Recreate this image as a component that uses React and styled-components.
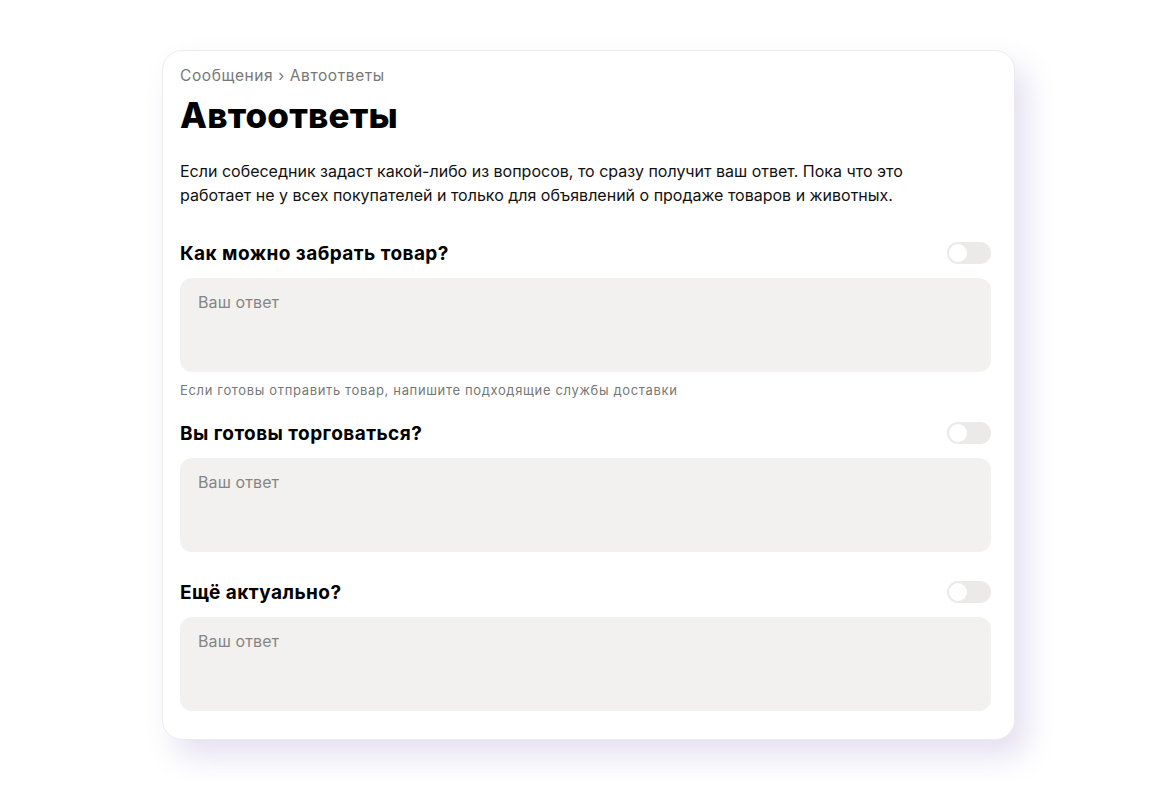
import styled, { createGlobalStyle } from 'styled-components';

const GlobalStyle = createGlobalStyle`
  body {
    margin: 0;
    background: #ffffff;
    font-family: Inter, "Noto Sans", sans-serif;
    color: #111;
  }
`

const Page = styled.div`
  padding: 50px 0 60px 162px;
`

const Card = styled.section`
  box-sizing: border-box;
  width: 853px;
  padding: 15px 23px 28px 17px;
  background: #fff;
  border: 1px solid #ececf0;
  border-radius: 20px;
  box-shadow: 12px 16px 30px rgba(105, 85, 170, 0.18);
`

const Crumbs = styled.div`
  font-size: 15.5px;
  line-height: 20px;
  letter-spacing: 0.6px;
  color: #777;
`

const Title = styled.h1`
  margin: 8px 0 0;
  font-size: 35px;
  line-height: 42px;
  font-weight: 800;
  letter-spacing: 0.2px;
  color: #000;
`

const Lead = styled.p`
  margin: 23px 0 0;
  font-size: 16px;
  line-height: 24px;
  color: #111;
`

const Question = styled.div`
  margin-top: ${p => (p.$first ? '34px' : p.$afterHint ? '24px' : '28px')};
`

const QHead = styled.div`
  display: flex;
  align-items: center;
  justify-content: space-between;
  height: 24px;
`

const QTitle = styled.h3`
  margin: 0;
  font-size: 19px;
  font-weight: 700;
  letter-spacing: 0.45px;
  color: #000;
`

const Toggle = styled.span`
  position: relative;
  width: 44px;
  height: 22px;
  border-radius: 11px;
  background: #ebeae8;

  &::after {
    content: '';
    position: absolute;
    top: 2px;
    left: 2px;
    width: 18px;
    height: 18px;
    border-radius: 50%;
    background: #fff;
  }
`

const Answer = styled.textarea`
  display: block;
  box-sizing: border-box;
  width: 100%;
  height: 94px;
  margin-top: 13px;
  padding: 14px 18px;
  border: none;
  border-radius: 12px;
  background: #f2f1f0;
  resize: none;
  font-family: inherit;
  font-size: 16px;
  line-height: 20px;
  letter-spacing: 0.1px;

  &::placeholder {
    color: #858585;
  }
`

const Hint = styled.div`
  margin-top: 11px;
  font-size: 13px;
  line-height: 14px;
  letter-spacing: 0.65px;
  color: #777;
`

const questions = [
  { title: 'Как можно забрать товар?', hint: 'Если готовы отправить товар, напишите подходящие службы доставки' },
  { title: 'Вы готовы торговаться?' },
  { title: 'Ещё актуально?' },
]

export default function App() {
  return (
    <Page>
      <GlobalStyle />
      <Card>
        <Crumbs>Сообщения › Автоответы</Crumbs>
        <Title>Автоответы</Title>
        <Lead>
          Если собеседник задаст какой-либо из вопросов, то сразу получит ваш ответ. Пока что это
          <br />
          работает не у всех покупателей и только для объявлений о продаже товаров и животных.
        </Lead>
        {questions.map((q, i) => (
          <Question key={q.title} $first={i === 0} $afterHint={i > 0 && !!questions[i - 1].hint}>
            <QHead>
              <QTitle>{q.title}</QTitle>
              <Toggle />
            </QHead>
            <Answer placeholder="Ваш ответ" />
            {q.hint && <Hint>{q.hint}</Hint>}
          </Question>
        ))}
      </Card>
    </Page>
  );
}
